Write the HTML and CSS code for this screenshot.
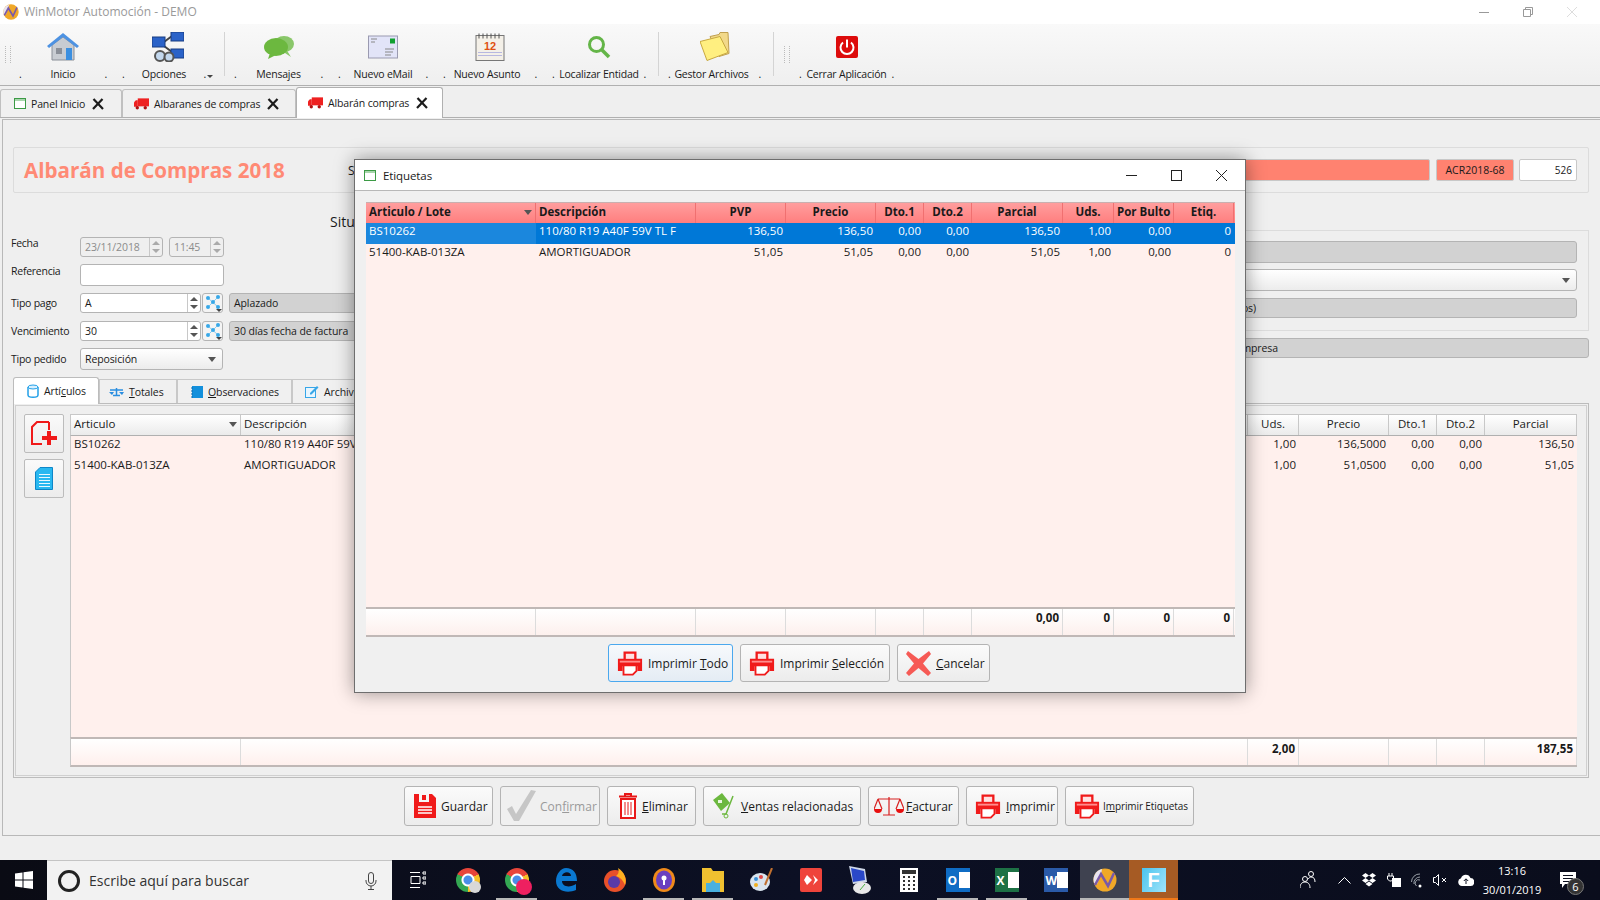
FILE: index.html
```html
<!DOCTYPE html>
<html lang="es">
<head>
    <meta charset="UTF-8">
    <meta name="viewport" content="width=device-width, initial-scale=1.0">
    <title>WinMotor Automoción - DEMO</title>
    <link rel="stylesheet" href="styles.css">
</head>
<body>
    <svg class="defs" width="0" height="0">
        <symbol id="i-print" viewBox="0 0 28 26">
            <path fill="#f01a1a" d="M7 0h14v8h6v13h-5v-5H6v5H1V8h6z"/>
            <rect x="9.500" y="2.500" width="9" height="5.500" fill="#ffe2e2"/>
            <rect x="3" y="10" width="22" height="2" fill="#ff8d8d"/>
            <path fill="#fff" stroke="#f01a1a" stroke-width="2" d="M7 15h14v6l-4 4H7z"/>
        </symbol>
        <symbol id="i-truck" viewBox="0 0 16 12">
            <rect x="4" y="0" width="12" height="8.500" fill="#ee2020"/>
            <path fill="#ee2020" d="M0 4l2-2h2v7H0z"/>
            <circle cx="3.500" cy="10" r="1.800" fill="#b01010"/>
            <circle cx="12" cy="10" r="1.800" fill="#b01010"/>
        </symbol>
        <symbol id="i-x" viewBox="0 0 12 12">
            <path d="M1.500 1l9.500 10M10.500 1L1 11" stroke="#1c1c1c" stroke-width="2.200" fill="none"/>
        </symbol>
        <symbol id="i-win" viewBox="0 0 12 11">
            <rect x="0.500" y="0.500" width="11" height="10" fill="#fff" stroke="#3c9a45"/>
            <rect x="1" y="1" width="10" height="2" fill="#a8d6ac"/>
        </symbol>
        <symbol id="i-net" viewBox="0 0 18 18">
            <path d="M4 4l10 9M14 3L4 13" stroke="#8ccdf0" fill="none"/>
            <circle cx="4" cy="4" r="2" fill="#38a8e8"/><circle cx="14" cy="3" r="2" fill="#38a8e8"/>
            <circle cx="9" cy="8" r="2" fill="#38a8e8"/><circle cx="4" cy="13" r="2" fill="#38a8e8"/><circle cx="14" cy="13" r="2" fill="#38a8e8"/>
            <path d="M12 15h6l-3 3z" fill="#444"/>
        </symbol>
        <symbol id="i-wm" viewBox="0 0 24 24">
            <circle cx="12" cy="12" r="11.500" fill="#f0a828"/>
            <path fill="#e8e4f0" d="M1 15A11 11 0 0 1 9 1l-1 6-4 9z"/>
            <path d="M2 17L8 6l7 12 6-13" stroke="#7a5aa8" stroke-width="2.500" fill="none"/>
        </symbol>
    </svg>

    <div class="titlebar">
        <svg class="app-logo" width="16" height="16"><use href="#i-wm"/></svg>
        <span class="app-title">WinMotor Automoción - DEMO</span>
        <div class="win-controls">
            <svg width="10" height="10" viewBox="0 0 10 10"><path d="M0 5.500h10" stroke="#999"/></svg>
            <svg width="10" height="10" viewBox="0 0 10 10"><path d="M.5 2.500h7v7h-7zM2.500 2.500V.5h7v7h-2" stroke="#999" fill="none"/></svg>
            <svg width="10" height="10" viewBox="0 0 10 10"><path d="M0 0l10 10M10 0L0 10" stroke="#ddd" fill="none"/></svg>
        </div>
    </div>

    <div class="toolbar">
        <i class="grip"></i>
        <div class="tool tool-inicio">
            <svg class="tool-icon" width="32" height="28" viewBox="0 0 32 28"><path fill="#c8ccd2" stroke="#8a8f98" d="M5 12L16 4l11 8v15H5z"/><path fill="#4d92e2" d="M0 13L16 0l16 13-2 2L16 4 2 15z"/><rect x="19" y="15" width="6" height="12" fill="#3b8fe0"/><rect x="9" y="15" width="6" height="6" fill="#8a8f98"/></svg>
            <div class="tool-label"><span>.</span><span>Inicio</span><span>.</span></div>
        </div>
        <div class="tool tool-opciones">
            <svg class="tool-icon" width="32" height="30" viewBox="0 0 32 30"><path d="M12 10l8-6M12 14l8 6" stroke="#444" stroke-width="2"/><rect x="0" y="5" width="13" height="10" fill="#2a62c8" stroke="#183c80"/><rect x="19" y="0" width="13" height="9" fill="#2a62c8" stroke="#183c80"/><rect x="19" y="17" width="13" height="9" fill="#2a62c8" stroke="#183c80"/><circle cx="8" cy="24" r="5" fill="#c3d8ee" stroke="#555" stroke-width="2"/><circle cx="17" cy="25" r="4.500" fill="#c3d8ee" stroke="#555" stroke-width="2"/></svg>
            <div class="tool-label"><span>.</span><span>Opciones</span><span>.<b class="tool-arrow"></b></span></div>
        </div>
        <i class="sep sep-a"></i>
        <div class="tool tool-mensajes">
            <svg class="tool-icon" width="30" height="24" viewBox="0 0 30 24"><ellipse cx="20" cy="9" rx="10" ry="8" fill="#8ac76a"/><path fill="#8ac76a" d="M22 14l5 8-9-6z"/><ellipse cx="12" cy="12" rx="12" ry="9" fill="#6cb83f"/><path fill="#6cb83f" d="M6 18l-2 6 8-4z"/></svg>
            <div class="tool-label"><span>.</span><span>Mensajes</span><span>.</span></div>
        </div>
        <div class="tool tool-email">
            <svg class="tool-icon" width="30" height="23" viewBox="0 0 30 23"><rect x=".5" y=".5" width="29" height="22" fill="#e2e4f8" stroke="#9a9ab0"/><rect x="22" y="3" width="5" height="5" fill="#10a030"/><path d="M3 3.500h6M3 6.500h4M17 13.500h9M17 16.500h8M17 19.500h6" stroke="#888"/></svg>
            <div class="tool-label"><span>.</span><span>Nuevo eMail</span><span>.</span></div>
        </div>
        <div class="tool tool-asunto">
            <svg class="tool-icon" width="30" height="29" viewBox="0 0 30 29"><rect x="1" y="3" width="28" height="25" fill="#f4f0e8" stroke="#777"/><path d="M4 1v5M8 1v5M12 1v5M16 1v5M20 1v5M24 1v5" stroke="#555"/><text class="cal-day" x="15" y="17" text-anchor="middle">12</text><path d="M3 20h24M3 23h24" stroke="#b8b8e0"/></svg>
            <div class="tool-label"><span>.</span><span class="label-shift">Nuevo Asunto</span><span>.</span></div>
        </div>
        <div class="tool tool-localizar">
            <svg class="tool-icon" width="24" height="24" viewBox="0 0 24 24"><circle cx="9.500" cy="9.500" r="7" fill="none" stroke="#64b548" stroke-width="3"/><path d="M14 14l8 8" stroke="#64b548" stroke-width="3.500"/></svg>
            <div class="tool-label"><span>.</span><span>Localizar Entidad</span><span>.</span></div>
        </div>
        <i class="sep sep-b"></i>
        <div class="tool tool-gestor">
            <svg class="tool-icon" width="30" height="29" viewBox="0 0 30 29"><path fill="#f2d98a" stroke="#c0a050" d="M10 4l9-2 1-2h8l1 21-10 3z"/><path fill="#ffef80" stroke="#c8a840" d="M0 9l20-5 8 16-21 8z"/></svg>
            <div class="tool-label"><span>.</span><span class="label-shift">Gestor Archivos</span><span>.</span></div>
        </div>
        <i class="sep sep-c"></i>
        <i class="grip grip-end"></i>
        <div class="tool tool-cerrar">
            <svg class="tool-icon" width="22" height="22" viewBox="0 0 22 22"><rect width="22" height="22" rx="2" fill="#dd0c0c"/><path d="M7 6.500a6.500 6.500 0 1 0 8 0M11 3.500v8" stroke="#fff" stroke-width="2" fill="none"/></svg>
            <div class="tool-label"><span>.</span><span>Cerrar Aplicación</span><span>.</span></div>
        </div>
    </div>

    <div class="doc-tabs">
        <div class="doc-tab doc-tab-1"><svg width="12" height="11"><use href="#i-win"/></svg>Panel Inicio<svg class="tab-x" width="12" height="12"><use href="#i-x"/></svg></div>
        <div class="doc-tab doc-tab-2"><svg width="15" height="12"><use href="#i-truck"/></svg>Albaranes de compras<svg class="tab-x" width="12" height="12"><use href="#i-x"/></svg></div>
        <div class="doc-tab doc-tab-3 active"><svg width="15" height="12"><use href="#i-truck"/></svg>Albarán compras<svg class="tab-x" width="12" height="12"><use href="#i-x"/></svg></div>
    </div>

    <div class="pane">
        <div class="head-group">
            <h1>Albarán de Compras 2018</h1>
            <span class="head-s">S</span>
            <div class="head-bar"></div>
            <div class="head-code">ACR2018-68</div>
            <div class="head-num">526</div>
        </div>

        <div class="form-area">
            <div class="form-left">
                <div class="situ">Situ</div>
                <div class="f-row f-row-top">
                    <label>Fecha</label>
                    <div class="spin disabled spin-date"><span>23/11/2018</span><b class="spin-btn"></b></div>
                    <div class="spin disabled spin-time"><span>11:45</span><b class="spin-btn"></b></div>
                </div>
                <div class="f-row f-row-top f-tall">
                    <label>Referencia</label>
                    <div class="input input-ref"></div>
                </div>
                <div class="f-row">
                    <label>Tipo pago</label>
                    <div class="spin spin-code"><span>A</span><b class="spin-btn"></b></div>
                    <div class="pick"><svg width="18" height="18"><use href="#i-net"/></svg></div>
                    <div class="ro-field">Aplazado</div>
                </div>
                <div class="f-row f-row-venc">
                    <label>Vencimiento</label>
                    <div class="spin spin-code"><span>30</span><b class="spin-btn"></b></div>
                    <div class="pick"><svg width="18" height="18"><use href="#i-net"/></svg></div>
                    <div class="ro-field">30 días fecha de factura</div>
                </div>
                <div class="f-row f-tall">
                    <label>Tipo pedido</label>
                    <div class="combo combo-pedido">Reposición<b class="caret"></b></div>
                </div>
            </div>
            <div class="form-right">
                <div class="right-group">
                    <div class="ro-bar"></div>
                    <div class="combo combo-wide"><b class="caret"></b></div>
                    <div class="ro-bar ro-short"><span>os)</span></div>
                </div>
                <div class="ro-bar ro-short ro-empresa"><span>mpresa</span></div>
            </div>
        </div>

        <div class="inner-tabs">
            <div class="inner-tab active inner-1"><svg width="12" height="14" viewBox="0 0 12 14"><path d="M1 3v8c0 3 10 3 10 0V3" fill="#fff" stroke="#22a0e8" stroke-width="1.500"/><ellipse cx="6" cy="3" rx="5" ry="2" fill="#d8f0ff" stroke="#22a0e8"/></svg><span>Artí<u>c</u>ulos</span></div>
            <div class="inner-tab inner-2"><svg width="15" height="11" viewBox="0 0 15 11"><path d="M1 4h13M7.500 2v7M4 9.500h7" stroke="#2a8ee0" stroke-width="1.500" fill="none"/><path d="M0 6h5l-2 3zM10 6h5l-2 3z" fill="#2a8ee0"/></svg><span><u>T</u>otales</span></div>
            <div class="inner-tab inner-3"><svg width="12" height="12" viewBox="0 0 12 12"><rect x="1" width="11" height="12" fill="#1390dc"/><path d="M0 2h2M0 5h2M0 8h2M0 11h2" stroke="#0a6ab0"/></svg><span><u>O</u>bservaciones</span></div>
            <div class="inner-tab inner-4"><svg width="14" height="13" viewBox="0 0 14 13"><rect x=".5" y="2.500" width="10" height="10" fill="#e8f6ff" stroke="#37a6e8"/><path d="M5 8l7-7 1.500 1.500-7 7H5z" fill="#37a6e8"/></svg><span>Archivos</span></div>
        </div>
        <div class="inner-pane">
            <div class="side-btns">
                <div class="side-btn"><svg width="26" height="26" viewBox="0 0 26 26"><path d="M13 1H6L1 6v17h10" fill="none" stroke="#f01a1a" stroke-width="2"/><path d="M18 1h-5M18 1v8" stroke="#f01a1a" stroke-width="2"/><path d="M18 10v14M11 17h15" stroke="#f01a1a" stroke-width="4"/></svg></div>
                <div class="side-btn"><svg width="18" height="23" viewBox="0 0 18 23"><path d="M5 .5h12.500v22H.5V5z" fill="#28b8f0" stroke="#0e86c8"/><path d="M4 7.500h11M4 10.500h11M4 13.500h11M4 16.500h11M4 19.500h11" stroke="#e8f8ff"/></svg></div>
            </div>
            <div class="grid">
                <div class="g-row g-head">
                    <span class="sorted">Articulo<b class="caret"></b></span><span>Descripción</span><span class="c">Uds.</span><span class="c">Precio</span><span class="c">Dto.1</span><span class="c">Dto.2</span><span class="c">Parcial</span>
                </div>
                <div class="g-body">
                    <div class="g-row"><span>BS10262</span><span>110/80 R19 A40F 59V TL F</span><span class="r">1,00</span><span class="r">136,5000</span><span class="r">0,00</span><span class="r">0,00</span><span class="r">136,50</span></div>
                    <div class="g-row"><span>51400-KAB-013ZA</span><span>AMORTIGUADOR</span><span class="r">1,00</span><span class="r">51,0500</span><span class="r">0,00</span><span class="r">0,00</span><span class="r">51,05</span></div>
                </div>
                <div class="g-row g-foot">
                    <span></span><span></span><span class="r">2,00</span><span></span><span></span><span></span><span class="r">187,55</span>
                </div>
            </div>
        </div>

        <div class="actions">
            <div class="btn btn-guardar"><svg width="22" height="24" viewBox="0 0 22 24"><path d="M0 0h5v8h10V0h3l4 4v20H0z" fill="#f01a1a"/><rect x="8" y="1" width="4" height="5" fill="#f01a1a"/><path d="M4 13h14M4 16h14M4 19h14" stroke="#fff" stroke-width="1.500"/></svg><span>Guardar</span></div>
            <div class="btn btn-confirmar disabled"><svg width="32" height="32" viewBox="0 0 32 32"><path d="M1 19l5-3 4 8L25 0l5 1-17 30H8z" fill="#c6c6c6"/></svg><span>Con<u>f</u>irmar</span></div>
            <div class="btn btn-eliminar"><svg width="18" height="26" viewBox="0 0 18 26"><path d="M6 3V1h6v2M0 3.500h18" stroke="#e81818" stroke-width="2" fill="none"/><path d="M2 6h14v19H2z" fill="#fff" stroke="#e81818" stroke-width="2"/><path d="M6 9v13M9 9v13M12 9v13" stroke="#e81818"/></svg><span><u>E</u>liminar</span></div>
            <div class="btn btn-ventas"><svg width="24" height="26" viewBox="0 0 24 26"><path d="M1 7l9-7 8 10-9 8z" fill="#6cb83f"/><rect x="6" y="7" width="4" height="3" fill="#e8f6e0"/><path d="M21 3l-7 18h-4" stroke="#6cb83f" stroke-width="1.500" fill="none"/><circle cx="14" cy="23" r="2" fill="none" stroke="#6cb83f"/></svg><span><u>V</u>entas relacionadas</span></div>
            <div class="btn btn-facturar"><svg width="30" height="22" viewBox="0 0 30 22"><path d="M15 2v18M9 20h12M4 4h22M4 4L0 14M4 4l4 10M26 4l-4 10M26 4l4 10" stroke="#d82020" stroke-width="1.200" fill="none"/><path d="M0 14h8a4 4 0 0 1-8 0zM22 14h8a4 4 0 0 1-8 0z" fill="#e81010"/></svg><span><u>F</u>acturar</span></div>
            <div class="btn btn-imprimir"><svg width="26" height="25"><use href="#i-print"/></svg><span><u>I</u>mprimir</span></div>
            <div class="btn btn-etiq"><svg width="26" height="25"><use href="#i-print"/></svg><span>I<u>m</u>primir Etiquetas</span></div>
        </div>
    </div>

    <div class="below"></div>

    <div class="taskbar">
        <div class="start"><svg width="18" height="18" viewBox="0 0 18 18"><path fill="#fff" d="M0 2.500l7.500-1v7H0zM8.500 1.300L18 0v8.500H8.500zM0 9.500h7.500v7L0 15.500zM8.500 9.500H18V18l-9.500-1.300z"/></svg></div>
        <div class="search">
            <i class="cortana"></i>
            <span>Escribe aquí para buscar</span>
            <svg class="mic" width="12" height="18" viewBox="0 0 12 18"><rect x="3.500" y=".5" width="5" height="11" rx="2.500" fill="none" stroke="#444"/><path d="M1 8v1a5 5 0 0 0 10 0V8M6 14v3M3 17.500h6" stroke="#444" fill="none"/></svg>
        </div>
        <div class="taskview"><svg width="16" height="18" viewBox="0 0 16 18"><path d="M0 1.500h10M0 16.500h10M1 5.500h9v7H1zM13 1h3v2h-3zM13 6h3v2h-3zM13 11h3v2h-3z" stroke="#fff" fill="none"/></svg></div>
        <div class="apps">
            <div class="app"><i class="ic-chrome ic-badge-grey"></i></div>
            <div class="app open"><i class="ic-chrome ic-badge"></i></div>
            <div class="app"><svg width="22" height="24" viewBox="0 0 22 24"><path fill="#0a78d0" d="M11 0c7 0 11 5 11 13H7c0 6 8 7 14 3v6c-9 4-20 1-20-9C1 6 6 0 11 0zm5 8c0-5-8-5-9 0z"/></svg></div>
            <div class="app"><svg width="24" height="24" viewBox="0 0 24 24"><circle cx="12" cy="13" r="11" fill="#e8502a"/><circle cx="11" cy="14" r="6" fill="#5a3aa8"/><path fill="#ffb020" d="M15 0c7 4 9 12 7 17-2-5-5-8-9-9 3-2 3-5 2-8z"/></svg></div>
            <div class="app open"><svg width="22" height="24" viewBox="0 0 22 24"><ellipse cx="11" cy="12" rx="11" ry="12" fill="#f08a1a"/><ellipse cx="11" cy="12" rx="8" ry="9.500" fill="#6a3fc0"/><circle cx="11" cy="10" r="2.500" fill="#fff"/><path d="M10 11h2v6h-2z" fill="#fff"/></svg></div>
            <div class="app open"><svg width="22" height="24" viewBox="0 0 22 24"><path fill="#f0c030" d="M0 0h9l2 3h11v21H0z"/><rect x="4" y="15" width="14" height="9" fill="#48b0e0"/><path d="M11 12l5 5H6z" fill="#48b0e0"/></svg></div>
            <div class="app"><svg width="24" height="24" viewBox="0 0 24 24"><ellipse cx="10" cy="14" rx="10" ry="9" fill="#d8e4ee"/><circle cx="6" cy="11" r="2" fill="#3a90d8"/><circle cx="11" cy="9" r="2" fill="#e04848"/><circle cx="6" cy="17" r="2" fill="#f0b020"/><path d="M22 0l-7 17" stroke="#c07030" stroke-width="2"/></svg></div>
            <div class="app"><svg width="22" height="24" viewBox="0 0 22 24"><rect width="22" height="24" rx="2" fill="#ef443b"/><path fill="#fff" d="M7 7l5 5-5 5-3-5zM13 7l5 5-5 5 2-5z"/></svg></div>
            <div class="app"><svg width="24" height="28" viewBox="0 0 24 28"><path fill="#cfd8e8" d="M1 0l16 3 2 13-14 2z"/><path fill="#2a48c8" d="M3 2l13 3 1 9-12 2z"/><ellipse cx="14" cy="22" rx="9" ry="6" fill="#e8e8e8"/><path d="M12 24l5-6" stroke="#4ab040"/></svg></div>
            <div class="app"><svg width="18" height="24" viewBox="0 0 18 24"><rect width="18" height="24" fill="#fff"/><rect x="2" y="2" width="14" height="4" fill="#333"/><path d="M3 9h2M8 9h2M13 9h2M3 13h2M8 13h2M13 13h2M3 17h2M8 17h2M13 17h2M3 21h2M8 21h2M13 21h2" stroke="#333" stroke-width="2"/></svg></div>
            <div class="app open"><div class="ic-office ic-outlook"><b>O</b><i></i></div></div>
            <div class="app open"><div class="ic-office ic-excel"><b>X</b><i></i></div></div>
            <div class="app"><div class="ic-office ic-word"><b>W</b><i></i></div></div>
            <div class="app app-wm"><svg width="24" height="24"><use href="#i-wm"/></svg></div>
            <div class="app app-f"><div class="ic-f">F</div></div>
        </div>
        <div class="tray">
            <svg class="tray-people" width="16" height="18" viewBox="0 0 16 18"><circle cx="5" cy="8" r="2.500" stroke="#fff" fill="none"/><circle cx="11" cy="3" r="2.500" stroke="#fff" fill="none"/><path d="M0 17c0-4 2-6 5-6s5 2 5 6M8 8c1-1 2-2 3-2 3 0 4 2 4 5" stroke="#fff" fill="none"/></svg>
            <svg class="tray-chev" width="13" height="8" viewBox="0 0 13 8"><path d="M.5 7.500l6-6 6 6" stroke="#fff" fill="none"/></svg>
            <svg class="tray-drop" width="14" height="14" viewBox="0 0 14 14"><path fill="#fff" d="M3.500 0L7 2.500 3.500 5 0 2.500zM10.500 0L14 2.500 10.500 5 7 2.500zM3.500 5L7 7.500 3.500 10 0 7.500zM10.500 5L14 7.500 10.500 10 7 7.500zM3.500 11L7 8.500l3.500 2.500L7 13.500z"/></svg>
            <svg class="tray-pow" width="15" height="14" viewBox="0 0 15 14"><path d="M3 0v3M6 0v3M1.500 3h6v3l-2 2h-2l-2-2z" stroke="#fff" fill="none"/><rect x="6.500" y="5.500" width="8" height="8" fill="#fff" stroke="#fff"/></svg>
            <svg class="tray-wifi" width="15" height="15" viewBox="0 0 15 15"><path d="M.5 9A8 8 0 0 1 9 1M3 11a6 6 0 0 1 6-7M5.500 13A3.500 3.500 0 0 1 9 7" stroke="#9aa0a8" fill="none"/><circle cx="9" cy="13" r="1.500" fill="#fff"/></svg>
            <svg class="tray-vol" width="14" height="14" viewBox="0 0 14 14"><path d="M.5 4.500h2l3-3v11l-3-3h-2zM9 5l4 4M13 5L9 9" stroke="#fff" fill="none"/></svg>
            <svg class="tray-cloud" width="16" height="12" viewBox="0 0 16 12"><path fill="#fff" d="M4 12a4 4 0 0 1-1-7.800A5 5 0 0 1 12.500 4 4 4 0 0 1 12 12z"/><path d="M8 10V5M5.800 7L8 4.800 10.200 7" stroke="#0c0f1f" fill="none"/></svg>
            <div class="clock"><span>13:16</span><span>30/01/2019</span></div>
            <div class="notif">
                <svg width="16" height="16" viewBox="0 0 16 16"><path fill="#fff" d="M0 0h16v12H5l-3 4v-4H0z"/><path d="M3 3.500h10M3 6.500h10M3 9.500h7" stroke="#0c0f1f"/></svg>
                <span class="notif-count">6</span>
            </div>
        </div>
    </div>

    <!-- dialogo modal encima del albaran -->
    <div class="dialog">
        <div class="dlg-title">
            <svg width="12" height="11"><use href="#i-win"/></svg>
            <span>Etiquetas</span>
            <div class="dlg-controls">
                <svg width="11" height="11" viewBox="0 0 11 11"><path d="M0 5.500h11" stroke="#222"/></svg>
                <svg width="11" height="11" viewBox="0 0 11 11"><rect x=".5" y=".5" width="10" height="10" fill="none" stroke="#222"/></svg>
                <svg width="11" height="11" viewBox="0 0 11 11"><path d="M0 0l11 11M11 0L0 11" stroke="#222" fill="none"/></svg>
            </div>
        </div>
        <div class="dlg-body">
            <div class="dlg-grid">
                <div class="d-row d-head">
                    <span class="sorted">Articulo / Lote<b class="caret"></b></span><span>Descripción</span><span class="c">PVP</span><span class="c">Precio</span><span class="c">Dto.1</span><span class="c">Dto.2</span><span class="c">Parcial</span><span class="c">Uds.</span><span class="c">Por Bulto</span><span class="c">Etiq.</span>
                </div>
                <div class="d-body">
                    <div class="d-row selected"><span>BS10262</span><span>110/80 R19 A40F 59V TL F</span><span class="r">136,50</span><span class="r">136,50</span><span class="r">0,00</span><span class="r">0,00</span><span class="r">136,50</span><span class="r">1,00</span><span class="r">0,00</span><span class="r">0</span></div>
                    <div class="d-row"><span>51400-KAB-013ZA</span><span>AMORTIGUADOR</span><span class="r">51,05</span><span class="r">51,05</span><span class="r">0,00</span><span class="r">0,00</span><span class="r">51,05</span><span class="r">1,00</span><span class="r">0,00</span><span class="r">0</span></div>
                </div>
                <div class="d-row d-foot">
                    <span></span><span></span><span></span><span></span><span></span><span></span><span class="r">0,00</span><span class="r">0</span><span class="r">0</span><span class="r">0</span>
                </div>
            </div>
            <div class="dlg-actions">
                <div class="btn btn-focus btn-todo"><svg width="26" height="25"><use href="#i-print"/></svg><span>Imprimir <u>T</u>odo</span></div>
                <div class="btn btn-sel"><svg width="26" height="25"><use href="#i-print"/></svg><span>Imprimir <u>S</u>elección</span></div>
                <div class="btn btn-cancel"><svg width="25" height="25" viewBox="0 0 25 25"><path d="M2 0l10.500 8L23 0l2 3-8 9.500 8 9.500-3 3-9.500-8L3 25l-3-3 8-9.500L0 3z" fill="#f65a55"/></svg><span><u>C</u>ancelar</span></div>
            </div>
        </div>
    </div>
</body>
</html>
```

FILE: styles.css
```css
* {
    margin: 0;
    padding: 0;
    box-sizing: border-box;
}

body {
    width: 1600px;
    height: 900px;
    overflow: hidden;
    position: relative;
    display: flex;
    flex-direction: column;
    background-color: #efefef;
    color: #1a1a1a;
    font-family: 'Open Sans', 'Noto Sans', sans-serif;
    font-size: 11.5px;
}

.defs {
    position: absolute;
}

u {
    text-underline-offset: 1px;
}

svg {
    flex: none;
}

/* title bar */
.titlebar {
    height: 24px;
    flex: none;
    display: flex;
    align-items: center;
    padding-left: 3px;
    background-color: #fff;
}

.app-logo {
    margin-right: 5px;
}

.app-title {
    color: #9a9a9a;
    font-size: 12px;
    line-height: 22px;
}

.win-controls {
    margin-left: auto;
    display: flex;
    gap: 34px;
    padding-right: 23px;
}

/* toolbar */
.toolbar {
    height: 62px;
    flex: none;
    display: flex;
    align-items: flex-start;
    background: linear-gradient(#f9f9f9, #efefef);
    border-bottom: 1px solid #b0b0b0;
    padding-top: 8px;
    padding-left: 5px;
}

.grip {
    width: 6px;
    height: 17px;
    margin-top: 14px;
    margin-right: 8px;
    flex: none;
    border-left: 1px dotted #bbb;
    border-right: 1px dotted #bbb;
}

.grip-end {
    margin-left: 10px;
    margin-right: 9px;
}

.tool {
    flex: none;
    height: 50px;
    display: flex;
    flex-direction: column;
    align-items: center;
}

.tool + .tool {
    margin-left: 15px;
}

.tool-icon {
    height: 30px;
}

.tool-label {
    width: 100%;
    margin-top: 5px;
    display: flex;
    justify-content: space-between;
    font-size: 10.5px;
    letter-spacing: -0.2px;
    line-height: 15px;
    white-space: nowrap;
}

.label-shift {
    margin-left: -6px;
}

.tool-inicio { width: 88px; }
.tool-opciones { width: 91px; }
.tool-mensajes { width: 89px; }
.tool-email { width: 90px; }
.tool-asunto { width: 94px; }
.tool-localizar { width: 94px; }
.tool-gestor { width: 93px; }
.tool-cerrar { width: 95px; }

.tool-arrow {
    display: inline-block;
    margin-left: 1px;
    border-left: 3px solid transparent;
    border-right: 3px solid transparent;
    border-top: 3px solid #444;
}

.sep {
    width: 1px;
    height: 44px;
    flex: none;
    background-color: #d4d4d4;
}

.sep-a { margin: 0 9px 0 11px; }
.sep-b { margin: 0 9px 0 12px; }
.sep-c { margin-left: 12px; }

/* document tabs */
.doc-tabs {
    height: 32px;
    flex: none;
    display: flex;
    align-items: flex-end;
    border-bottom: 1px solid #b0b0b0;
}

.doc-tab {
    height: 28px;
    display: flex;
    align-items: center;
    gap: 5px;
    padding-left: 13px;
    font-size: 10.5px;
    letter-spacing: -0.15px;
    border: 1px solid #c0c0c0;
    border-bottom: none;
    border-radius: 3px 3px 0 0;
    background-color: #f0f0f0;
}

.doc-tab-1 { width: 122px; }
.doc-tab-2 { width: 174px; padding-left: 11px; }
.doc-tab-3 { width: 147px; padding-left: 11px; }

.doc-tab.active {
    height: 31px;
    margin-bottom: -1px;
    background-color: #fff;
    border-color: #b0b0b0;
}

.tab-x {
    margin-left: 2px;
}

/* main pane */
.pane {
    height: 717px;
    flex: none;
    margin: 1px 0 0 2px;
    border: 1px solid #b8b8b8;
    border-right: none;
    padding: 27px 11px 0 10px;
    display: flex;
    flex-direction: column;
}

.below {
    flex: 1;
}

.head-group {
    height: 46px;
    flex: none;
    display: flex;
    align-items: center;
    border: 1px solid #dcdcdc;
    border-radius: 2px;
    padding: 0 11px 0 10px;
}

h1 {
    width: 324px;
    color: #ff8a75;
    font-family: 'Open Sans', sans-serif;
    font-size: 20.6px;
    font-weight: bold;
    white-space: nowrap;
}

.head-s {
    width: 30px;
    font-size: 12px;
}

.head-bar {
    flex: 1;
    height: 22px;
    background-color: #ff8270;
    border: 1px solid #c8c8c8;
    border-radius: 2px;
}

.head-code {
    width: 78px;
    height: 22px;
    margin-left: 6px;
    background-color: #ff8270;
    border: 1px solid #c8c8c8;
    border-radius: 2px;
    text-align: center;
    font-size: 10.5px;
    line-height: 20px;
}

.head-num {
    width: 58px;
    height: 22px;
    margin-left: 5px;
    background-color: #fff;
    border: 1px solid #c8c8c8;
    border-radius: 2px;
    text-align: right;
    padding-right: 4px;
    font-size: 10px;
    line-height: 20px;
}

/* form */
.form-area {
    height: 183px;
    flex: none;
    display: flex;
    margin-left: -2px;
}

.form-left {
    width: 351px;
    flex: none;
    padding-top: 20px;
    display: flex;
    flex-direction: column;
    gap: 7px;
}

.situ {
    height: 17px;
    margin-left: 319px;
    font-size: 14px;
    line-height: 17px;
    white-space: nowrap;
}

.f-row {
    height: 20px;
    display: flex;
    align-items: center;
    gap: 6px;
}

.f-row-venc {
    margin-top: 1px;
}

.f-tall {
    height: 22px;
}

.f-row label {
    width: 69px;
    margin-right: -6px;
    flex: none;
    font-size: 10.5px;
    letter-spacing: -0.25px;
    white-space: nowrap;
}

.f-row-top label {
    margin-top: -9px;
}

.spin,
.input,
.combo,
.pick,
.ro-field,
.ro-bar {
    height: 100%;
    border: 1px solid #b4b4b4;
    border-radius: 3px;
    display: flex;
    align-items: center;
    flex: none;
    font-size: 10.5px;
    letter-spacing: -0.1px;
}

.spin,
.input {
    background-color: #fff;
}

.spin {
    padding-left: 4px;
    justify-content: space-between;
}

.spin-date { width: 83px; }
.spin-time { width: 55px; }
.spin-code { width: 121px; margin-right: -5px; }

.spin.disabled {
    background-color: #efefef;
    color: #8c8c8c;
}

.spin-btn {
    width: 13px;
    height: 100%;
    flex: none;
    position: relative;
    border-left: 1px solid #c8c8c8;
}

.spin-btn::before,
.spin-btn::after {
    content: '';
    position: absolute;
    left: 2px;
    border-left: 4px solid transparent;
    border-right: 4px solid transparent;
}

.spin-btn::before {
    top: 3px;
    border-bottom: 4px solid #555;
}

.spin-btn::after {
    bottom: 3px;
    border-top: 4px solid #555;
}

.disabled .spin-btn::before { border-bottom-color: #aaa; }
.disabled .spin-btn::after { border-top-color: #aaa; }

.input-ref {
    width: 144px;
}

.pick {
    width: 21px;
    justify-content: center;
    background-color: #f4f4f4;
}

.ro-field {
    width: 180px;
    padding-left: 4px;
    background-color: #d2d2d2;
    white-space: nowrap;
}

.combo {
    background: linear-gradient(#fff, #ececec);
    padding-left: 4px;
    padding-right: 6px;
}

.combo-pedido {
    width: 143px;
}

.caret {
    margin-left: auto;
    border-left: 4px solid transparent;
    border-right: 4px solid transparent;
    border-top: 5px solid #555;
}

.form-right {
    flex: 1;
    padding-top: 37px;
}

.right-group {
    height: 101px;
    border: 1px solid #dcdcdc;
    padding: 10px 11px 0 0;
    display: flex;
    flex-direction: column;
    gap: 6px;
}

.ro-bar {
    height: 22px;
    flex: none;
    background-color: #d2d2d2;
    justify-content: flex-end;
}

.combo-wide {
    height: 22px;
}

.ro-short {
    height: 20px;
    margin-top: 1px;
    padding-right: 320px;
}

.ro-empresa {
    margin-top: 7px;
    padding-right: 310px;
}

/* inner tabs */
.inner-tabs {
    height: 27px;
    flex: none;
    display: flex;
    align-items: flex-end;
}

.inner-tab {
    height: 24px;
    display: flex;
    align-items: center;
    gap: 5px;
    font-size: 10.5px;
    letter-spacing: -0.1px;
    white-space: nowrap;
    border: 1px solid #c8c8c8;
    border-bottom: none;
    background-color: #f0f0f0;
}

.inner-tab.active {
    height: 27px;
    background-color: #fff;
    border-radius: 3px 3px 0 0;
    margin-bottom: -1px;
    position: relative;
    border-color: #bcbcbc;
}

.inner-1 { width: 86px; padding-left: 13px; }
.inner-2 { width: 78px; padding-left: 9px; }
.inner-3 { width: 115px; padding-left: 13px; }
.inner-4 { width: 90px; padding-left: 12px; }

.inner-pane {
    height: 375px;
    flex: none;
    display: flex;
    border: 1px solid #bcbcbc;
    outline: 1px solid #d0d0d0;
    outline-offset: -3px;
    padding: 10px 11px 10px 10px;
    gap: 6px;
}

.side-btns {
    width: 40px;
    flex: none;
    display: flex;
    flex-direction: column;
    gap: 6px;
}

.side-btn {
    height: 39px;
    display: flex;
    align-items: center;
    justify-content: center;
    border: 1px solid #bcbcbc;
    border-radius: 2px;
    background: linear-gradient(#fafafa, #ececec);
}

/* data grid */
.grid {
    flex: 1;
    display: flex;
    flex-direction: column;
    font-size: 11.5px;
}

.g-row {
    display: grid;
    grid-template-columns: 170px 1007px 51px 90px 48px 48px 92px;
    height: 21px;
    line-height: 15px;
}

.g-row span {
    padding: 0 3px;
    white-space: nowrap;
}

.g-head {
    height: 22px;
    flex: none;
    background: linear-gradient(#fff, #ebebeb);
    border: 1px solid #c8c8c8;
    border-right: none;
    border-bottom-color: #b0b0b0;
}

.g-head span {
    height: 100%;
    line-height: 18px;
    border-right: 1px solid #c8c8c8;
}

.sorted {
    display: flex;
    justify-content: space-between;
    align-items: flex-start;
}

.sorted .caret {
    margin-top: 7px;
}

.g-body {
    flex: 1;
    background-color: #fff0ed;
    border-left: 1px solid #c8c8c8;
}

.g-foot {
    height: 30px;
    flex: none;
    background: linear-gradient(#fff, #fff0ed);
    border-top: 2px solid #c0b8b6;
    border-bottom: 2px solid #c0b8b6;
    border-left: 1px solid #c8c8c8;
    font-weight: bold;
}

.g-foot span {
    border-right: 1px solid #dcdcdc;
    line-height: 20px;
}

.c { text-align: center; }
.r { text-align: right; }

/* buttons */
.actions {
    margin-top: 8px;
    margin-left: 391px;
    display: flex;
    gap: 7px;
}

.btn {
    height: 40px;
    flex: none;
    display: flex;
    align-items: center;
    gap: 5px;
    padding-left: 8px;
    font-size: 12px;
    white-space: nowrap;
    background: linear-gradient(#fbfbfb, #ececec);
    border: 1px solid #b4b4b4;
    border-radius: 3px;
}

.btn-guardar { width: 89px; padding-left: 9px; }
.btn-confirmar { width: 100px; gap: 2px; padding-left: 5px; color: #9a9a9a; background: #f0f0f0; }
.btn-eliminar { width: 89px; padding-left: 11px; }
.btn-ventas { width: 158px; }
.btn-facturar { width: 91px; padding-left: 5px; gap: 2px; }
.btn-imprimir { width: 92px; }
.btn-etiq { width: 129px; font-size: 10px; letter-spacing: -0.1px; gap: 3px; }
.btn-todo { width: 125px; }
.btn-sel { width: 150px; }
.btn-cancel { width: 93px; }

.btn-focus {
    border-color: #4aa8ee;
    background: linear-gradient(#f6f9fc, #e4ecf4);
}

/* dialog */
.dialog {
    position: absolute;
    left: 354px;
    top: 159px;
    width: 892px;
    height: 534px;
    display: flex;
    flex-direction: column;
    background-color: #f0f0f0;
    border: 1px solid #6e6e6e;
    box-shadow: 0 0 18px rgba(0, 0, 0, 0.4);
}

.dlg-title {
    height: 31px;
    flex: none;
    display: flex;
    align-items: center;
    gap: 7px;
    padding-left: 9px;
    background-color: #fff;
    border-bottom: 1px solid #b8b8b8;
    font-size: 11.5px;
    letter-spacing: -0.1px;
}

.dlg-controls {
    margin-left: auto;
    display: flex;
    gap: 34px;
    padding-right: 18px;
}

.dlg-body {
    flex: 1;
    display: flex;
    flex-direction: column;
    padding: 11px 10px 0 11px;
}

.dlg-grid {
    height: 435px;
    flex: none;
    display: flex;
    flex-direction: column;
}

.d-row {
    display: grid;
    grid-template-columns: 170px 160px 90px 90px 48px 48px 91px 51px 60px 60px;
    height: 21px;
    line-height: 15px;
    font-size: 11.5px;
}

.d-row span {
    padding: 0 3px;
    white-space: nowrap;
}

.d-head {
    flex: none;
    background: linear-gradient(#ff9e9e, #ff7e7e);
    font-weight: bold;
    border-top: 1px solid #c8b0b0;
}

.d-head span {
    height: 100%;
    line-height: 17px;
    border-right: 1px solid #f07070;
}

.d-body {
    flex: 1;
    background-color: #fff0ed;
}

.selected {
    background-color: #0078d7;
    color: #fff;
}

.selected span:first-child {
    background-color: #1b87dd;
}

.d-foot {
    height: 30px;
    flex: none;
    background: linear-gradient(#fff, #fdf0ed);
    border-top: 2px solid #c0b8b6;
    border-bottom: 2px solid #c0b8b6;
    font-weight: bold;
}

.d-foot span {
    border-right: 1px solid #dcdcdc;
    line-height: 18px;
}

.dlg-actions {
    margin-top: 7px;
    margin-left: 242px;
    display: flex;
    gap: 7px;
}

.dlg-actions .btn {
    height: 38px;
}

/* taskbar */
.taskbar {
    height: 40px;
    flex: none;
    display: flex;
    align-items: stretch;
    background: linear-gradient(90deg, #0a0b14, #0c1024 50%, #0a0d1c);
    color: #fff;
}

.start {
    width: 47px;
    flex: none;
    display: flex;
    align-items: center;
    justify-content: center;
}

.search {
    width: 345px;
    flex: none;
    display: flex;
    align-items: center;
    background-color: #f2f2f2;
    border-top: 1px solid #c4c4c4;
    color: #333;
    font-size: 14px;
    padding-left: 11px;
}

.cortana {
    width: 22px;
    height: 22px;
    margin-right: 9px;
    border: 3px solid #222;
    border-radius: 50%;
}

.mic {
    margin-left: auto;
    margin-right: 15px;
}

.taskview {
    width: 51px;
    flex: none;
    display: flex;
    align-items: center;
    justify-content: center;
}

.apps {
    display: flex;
}

.app {
    width: 49px;
    flex: none;
    display: flex;
    align-items: center;
    justify-content: center;
    position: relative;
}

.app.open::after {
    content: '';
    position: absolute;
    left: 4px;
    right: 4px;
    bottom: 0;
    height: 2px;
    background-color: #b8b8b8;
}

.app-wm {
    background-color: #3f4250;
    box-shadow: inset 0 -2px 0 #b8b8b8;
}

.app-f {
    background-color: #a65b24;
    box-shadow: inset 0 -2px 0 #f07818;
}

.ic-chrome {
    width: 24px;
    height: 24px;
    border-radius: 50%;
    position: relative;
    background:
        radial-gradient(circle, #4a8ee8 0 4px, #fff 5px 6px, transparent 7px),
        conic-gradient(from -60deg, #e8453a 0 120deg, #f6c028 120deg 240deg, #34a853 240deg 360deg);
}

.ic-badge::after,
.ic-badge-grey::after {
    content: '';
    position: absolute;
    right: -3px;
    bottom: -3px;
    width: 16px;
    height: 16px;
    border-radius: 50%;
    background-color: #ee2060;
}

.ic-badge-grey::after {
    right: -1px;
    bottom: -1px;
    width: 12px;
    height: 12px;
    background-color: #d8d8d8;
}

.ic-office {
    width: 24px;
    height: 24px;
    position: relative;
    display: flex;
    align-items: center;
    font-size: 12px;
    color: #fff;
    padding-left: 2px;
}

.ic-office b {
    position: relative;
}

.ic-office i {
    position: absolute;
    right: 0;
    top: 4px;
    bottom: 4px;
    width: 11px;
    background-color: #fff;
}

.ic-outlook { background-color: #0f6cc4; }
.ic-excel { background-color: #1d7145; }
.ic-word { background-color: #2a5aa8; }

.ic-f {
    width: 24px;
    height: 24px;
    background: linear-gradient(120deg, #4ac4ee, #a0e4fa);
    color: #fff;
    font-family: 'Liberation Sans', sans-serif;
    font-size: 20px;
    font-weight: bold;
    text-align: center;
    line-height: 24px;
}

.tray {
    flex: 1;
    display: flex;
    align-items: center;
    padding-left: 122px;
}

.tray-chev { margin-left: 22px; }
.tray-drop { margin-left: 11px; }
.tray-pow { margin-left: 10px; }
.tray-wifi { margin-left: 10px; }
.tray-vol { margin-left: 7px; }
.tray-cloud { margin-left: 11px; }

.clock {
    width: 60px;
    margin-left: 8px;
    display: flex;
    flex-direction: column;
    align-items: center;
    gap: 5px;
    font-size: 11px;
    line-height: 14px;
    white-space: nowrap;
}

.notif {
    position: relative;
    margin-left: 18px;
    display: flex;
}

.notif-count {
    position: absolute;
    left: 7px;
    top: 6px;
    width: 17px;
    height: 17px;
    border-radius: 50%;
    background-color: #333;
    border: 1px solid #777;
    font-size: 11px;
    text-align: center;
    line-height: 15px;
}

.cal-day {
    font-family: 'Liberation Sans', sans-serif;
    font-size: 11px;
    font-weight: bold;
    fill: #e05010;
}
```
